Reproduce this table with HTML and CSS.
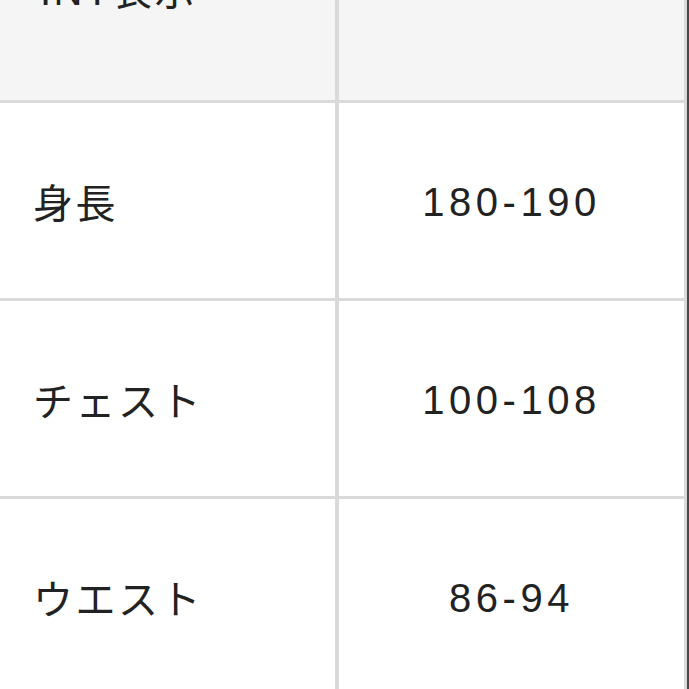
FILE: index.html
```html
<!DOCTYPE html>
<html lang="ja">
<head>
<meta charset="utf-8">
<link rel="stylesheet" href="styles.css">
</head>
<body>
<div class="viewport">
  <div class="size-table">
    <div class="cell head label">INT表示</div>
    <div class="cell head value"></div>
    <div class="cell label">身長</div>
    <div class="cell value">180-190</div>
    <div class="cell label">チェスト</div>
    <div class="cell value">100-108</div>
    <div class="cell label">ウエスト</div>
    <div class="cell value">86-94</div>
  </div>
</div>
</body>
</html>
```
FILE: styles.css
```css
html, body {
  margin: 0;
  padding: 0;
  height: 100%;
  overflow: hidden;
}
body {
  background: #484848;
  font-family: "Liberation Sans", "Noto Sans CJK JP", sans-serif;
  color: #222;
}
.viewport {
  width: 687px;
  height: 689px;
  overflow: hidden;
  background: #dadada;
}
.size-table {
  display: grid;
  grid-template-columns: 335px 345px;
  grid-template-rows: 224px 195px 195px 195px;
  gap: 3px 4px;
  margin-top: -124px;
  padding-right: 3px;
  background: #dadada;
}
.cell {
  background: #fff;
  display: flex;
  align-items: center;
  font-size: 40px;
  letter-spacing: 2.5px;
}
.cell.head {
  background: #f5f5f5;
}
.label {
  padding-left: 33px;
}
.head.label {
  padding-left: 40px;
}
.value {
  justify-content: center;
  letter-spacing: 4.5px;
  padding-top: 4px;
}
```
